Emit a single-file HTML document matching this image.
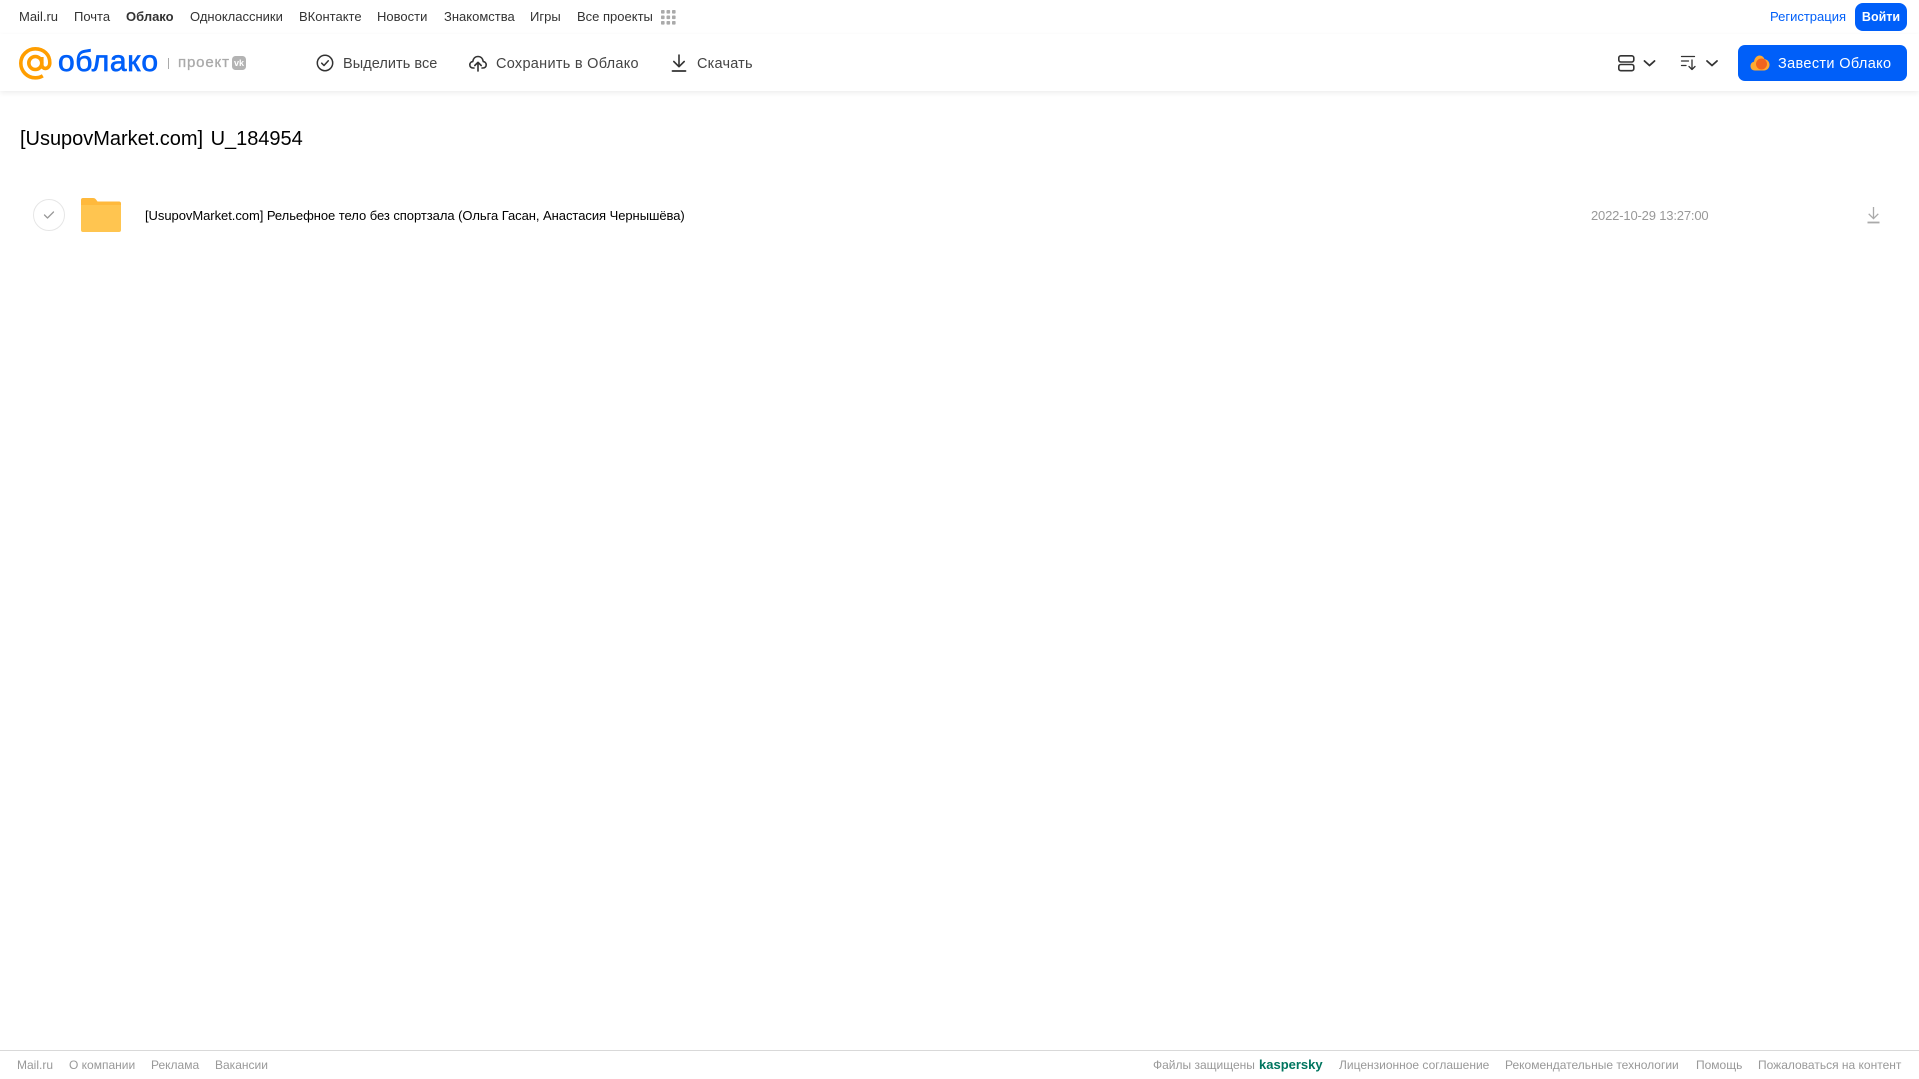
<!DOCTYPE html>
<html lang="ru"><head><meta charset="utf-8"><title>Облако</title>
<style>
html,body{margin:0;padding:0;background:#fff}
body{width:1919px;height:1079px;position:relative;overflow:hidden;font-family:"Liberation Sans",sans-serif}
.t{position:absolute;white-space:nowrap}
.n{top:8px;font-size:13px;line-height:17px;color:#333}
.a{top:54px;font-size:14.5px;line-height:20px;color:#444}
.f{top:1057px;font-size:12px;line-height:16px;color:#999}
svg{position:absolute;overflow:visible}
</style></head><body>
<span class="t n" style="left:19px">Mail.ru</span>
<span class="t n" style="left:74px">Почта</span>
<span class="t n" style="left:126px;font-weight:bold">Облако</span>
<span class="t n" style="left:190px">Одноклассники</span>
<span class="t n" style="left:299px">ВКонтакте</span>
<span class="t n" style="left:377px">Новости</span>
<span class="t n" style="left:444px">Знакомства</span>
<span class="t n" style="left:530px">Игры</span>
<span class="t n" style="left:577px">Все проекты</span>
<svg style="left:661px;top:10px" width="15" height="15" fill="#aaa">
<rect x="0" y="0" width="3.6" height="3.6" rx=".8"/><rect x="5.5" y="0" width="3.6" height="3.6" rx=".8"/><rect x="11" y="0" width="3.6" height="3.6" rx=".8"/>
<rect x="0" y="5.5" width="3.6" height="3.6" rx=".8"/><rect x="5.5" y="5.5" width="3.6" height="3.6" rx=".8"/><rect x="11" y="5.5" width="3.6" height="3.6" rx=".8"/>
<rect x="0" y="11" width="3.6" height="3.6" rx=".8"/><rect x="5.5" y="11" width="3.6" height="3.6" rx=".8"/><rect x="11" y="11" width="3.6" height="3.6" rx=".8"/>
</svg>
<span class="t n" style="left:1770px;color:#005ff9">Регистрация</span>
<div class="t" style="left:1855px;top:3px;width:52px;height:28px;border-radius:8px;background:#005ff9;color:#fff;font-size:12.5px;font-weight:bold;line-height:28px;text-align:center">Войти</div>

<div style="position:absolute;left:0;top:34px;width:1919px;height:57px;background:#fff;box-shadow:0 2px 5px rgba(0,0,0,.07)"></div>

<svg style="left:19px;top:47px" width="33" height="33" viewBox="0 0 33 33" fill="none" stroke="#ff9e00" stroke-width="3.6">
<circle cx="16.3" cy="16" r="6.5"/>
<path d="M22.8 10v7.5c0 5.5 7.7 5.5 8-1.5C31 7.500 24.500 1.800 16.300 1.800 8.300 1.800 1.800 8.300 1.800 16.300s6.500 14.500 14.500 14.500c3 0 5.300-.7 7.500-2"/>
</svg>
<svg style="left:57px;top:44px" width="104" height="34">
<text x="1" y="27" font-family="Liberation Sans" font-size="30" fill="#005ff9" stroke="#005ff9" stroke-width=".7" textLength="100" lengthAdjust="spacing">облако</text>
</svg>
<div style="position:absolute;left:168px;top:58px;width:1px;height:11px;background:#aaa"></div>
<span class="t" style="left:178px;top:53px;font-size:15px;line-height:20px;color:#aaa;letter-spacing:.85px;-webkit-text-stroke:.3px #aaa">проект</span>
<div class="t" style="left:232px;top:56px;width:14px;height:14px;border-radius:3.500px;background:#b3b3b3;color:#fff;font-size:9px;font-weight:bold;line-height:14px;text-align:center">vk</div>

<svg style="left:316px;top:54px" width="18" height="18" viewBox="0 0 18 18" fill="none" stroke="#333" stroke-width="1.500" stroke-linecap="round" stroke-linejoin="round">
<circle cx="9" cy="9" r="7.700"/><path d="M5.700 9.200l2.300 2.300 4.300-4.700"/>
</svg>
<span class="t a" style="left:343px;letter-spacing:.05px">Выделить все</span>
<svg style="left:469px;top:54px" width="18" height="18" viewBox="0 0 18 18" fill="none" stroke="#333" stroke-width="1.600" stroke-linecap="round" stroke-linejoin="round">
<path d="M5 14H4C2 14 .8 12.500 .8 10.800c0-1.700 1.200-3 2.900-3.200C4.200 4.500 6.300 2.500 9 2.500s4.800 2 5.300 5.100c1.700.2 2.900 1.500 2.900 3.200 0 1.700-1.200 3.200-3.200 3.200h-1"/>
<path d="M9 17V8.500M5.800 11.500L9 8.300l3.200 3.200"/>
</svg>
<span class="t a" style="left:496px;letter-spacing:.28px">Сохранить в Облако</span>
<svg style="left:671px;top:54px" width="16" height="18" viewBox="0 0 16 18" fill="none" stroke="#333" stroke-width="1.600" stroke-linecap="round" stroke-linejoin="round">
<path d="M8 1v11.500M2.800 7.500L8 12.700l5.200-5.200"/><path d="M1.500 17h13" stroke-width="1.800"/>
</svg>
<span class="t a" style="left:697px;letter-spacing:.2px">Скачать</span>

<svg style="left:1618px;top:55px" width="42" height="17" viewBox="0 0 42 17" fill="none" stroke="#333" stroke-width="1.600" stroke-linecap="round" stroke-linejoin="round">
<rect x=".8" y=".8" width="15" height="6.200" rx="2"/><rect x=".8" y="9.500" width="15" height="6.200" rx="2"/>
<path d="M26.500 6l5 4.500 5-4.500" stroke-width="1.800"/>
</svg>
<svg style="left:1680px;top:55px" width="40" height="17" viewBox="0 0 40 17" fill="none" stroke="#333" stroke-width="1.300" stroke-linecap="round" stroke-linejoin="round">
<path d="M1.500 1.500h13M1.500 6h7M1.500 10.500h4.500"/>
<path d="M12 5v9.500M9 11.500l3 3 3-3"/>
<path d="M27 6l5 4.500 5-4.500" stroke-width="1.800"/>
</svg>

<div style="position:absolute;left:1738px;top:45px;width:169px;height:36px;border-radius:7px;background:#005ff9"></div>
<svg style="left:1750px;top:54px" width="20" height="18" viewBox="0 0 20 18">
<path d="M5 16.500C2 16.500 .5 14.500 .5 12c0-2.300 1.500-4 3.500-4.300C4.500 4 6.800 1.500 9.500 1.500c2.300 0 4.200 1.500 5 3.600 2.700.3 5 2.500 5 5.700 0 3.300-2.500 5.700-5.500 5.700z" fill="#ffa930"/>
<circle cx="11.500" cy="10" r="5.500" fill="#f0641e"/>
</svg>
<span class="t" style="left:1778px;top:54px;font-size:14.5px;line-height:20px;color:#fff;letter-spacing:.35px">Завести Облако</span>

<span class="t" id="h" style="left:20px;top:126px;font-size:20px;line-height:26px;color:#000;letter-spacing:-.02px;word-spacing:2px">[UsupovMarket.com] U_184954</span>

<div style="position:absolute;left:33px;top:199px;width:30px;height:30px;border:1px solid #e6e6e6;border-radius:50%"></div>
<svg style="left:43px;top:210px" width="12" height="10" fill="none" stroke="#999" stroke-width="1.300" stroke-linecap="round" stroke-linejoin="round"><path d="M1.500 5l3 3 6-6"/></svg>

<svg style="left:81px;top:198px" width="40" height="34" viewBox="0 0 40 34">
<path d="M2 0h10c1.500 0 2.300.5 3 1.500l1.500 2H38a2 2 0 0 1 2 2V8H0V2a2 2 0 0 1 2-2z" fill="#ffb93c"/>
<path d="M0 7h40v25a2 2 0 0 1-2 2H2a2 2 0 0 1-2-2z" fill="#ffc550"/>
</svg>

<span class="t" style="left:145px;top:208px;font-size:13px;line-height:16px;color:#000;letter-spacing:-.05px">[UsupovMarket.com] Рельефное тело без спортзала (Ольга Гасан, Анастасия Чернышёва)</span>
<span class="t" style="left:1591px;top:208px;font-size:13px;line-height:16px;color:#999;letter-spacing:-.17px">2022-10-29 13:27:00</span>
<svg style="left:1866px;top:206px" width="15" height="18" viewBox="0 0 15 18" fill="none" stroke="#aaa" stroke-width="1.300">
<path d="M7.500 1v11.500M2.700 7.800l4.800 4.800 4.800-4.800"/><path d="M1.500 16.500h12" stroke-width="1.800"/>
</svg>

<div style="position:absolute;left:0;top:1050px;width:1919px;height:1px;background:#d9d9d9"></div>
<span class="t f" style="left:17px">Mail.ru</span>
<span class="t f" style="left:69px">О компании</span>
<span class="t f" style="left:151px">Реклама</span>
<span class="t f" style="left:215px">Вакансии</span>
<span class="t f" style="left:1153px">Файлы защищены</span>
<span class="t f" style="left:1259px;color:#00755f;font-weight:bold;font-size:13px">kaspersky</span>
<span class="t f" style="left:1339px">Лицензионное соглашение</span>
<span class="t f" style="left:1505px">Рекомендательные технологии</span>
<span class="t f" style="left:1696px">Помощь</span>
<span class="t f" style="left:1758px">Пожаловаться на контент</span>
</body></html>
